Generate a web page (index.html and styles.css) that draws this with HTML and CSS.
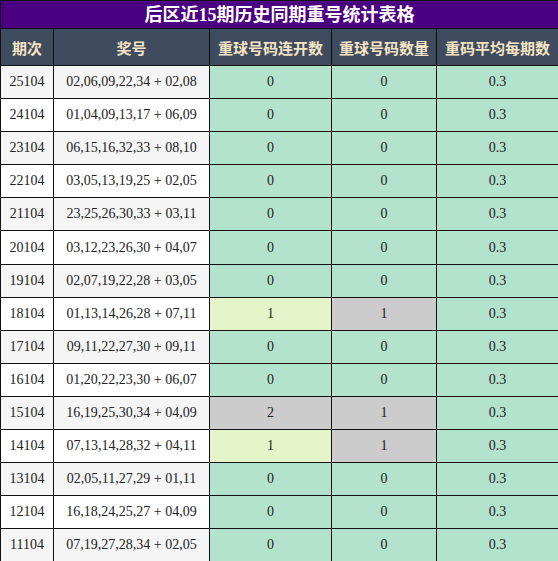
FILE: index.html
```html
<!DOCTYPE html>
<html lang="zh">
<head>
    <meta charset="UTF-8">
    <title>后区近15期历史同期重号统计表格</title>
    <link rel="stylesheet" href="styles.css">
</head>
<body>

<table class="stats">
    <colgroup>
        <col class="c-issue">
        <col class="c-nums">
        <col class="c-a">
        <col class="c-b">
        <col class="c-c">
    </colgroup>
    <thead>
        <tr class="title-row"><th colspan="5">后区近15期历史同期重号统计表格</th></tr>
        <tr class="head-row">
            <th>期次</th>
            <th>奖号</th>
            <th>重球号码连开数</th>
            <th>重球号码数量</th>
            <th>重码平均每期数</th>
        </tr>
    </thead>
    <tbody>
        <tr><td>25104</td><td>02,06,09,22,34 + 02,08</td><td class="g">0</td><td class="g">0</td><td class="g">0.3</td></tr>
        <tr><td>24104</td><td>01,04,09,13,17 + 06,09</td><td class="g">0</td><td class="g">0</td><td class="g">0.3</td></tr>
        <tr><td>23104</td><td>06,15,16,32,33 + 08,10</td><td class="g">0</td><td class="g">0</td><td class="g">0.3</td></tr>
        <tr><td>22104</td><td>03,05,13,19,25 + 02,05</td><td class="g">0</td><td class="g">0</td><td class="g">0.3</td></tr>
        <tr><td>21104</td><td>23,25,26,30,33 + 03,11</td><td class="g">0</td><td class="g">0</td><td class="g">0.3</td></tr>
        <tr><td>20104</td><td>03,12,23,26,30 + 04,07</td><td class="g">0</td><td class="g">0</td><td class="g">0.3</td></tr>
        <tr><td>19104</td><td>02,07,19,22,28 + 03,05</td><td class="g">0</td><td class="g">0</td><td class="g">0.3</td></tr>
        <tr><td>18104</td><td>01,13,14,26,28 + 07,11</td><td class="y">1</td><td class="s">1</td><td class="g">0.3</td></tr>
        <tr><td>17104</td><td>09,11,22,27,30 + 09,11</td><td class="g">0</td><td class="g">0</td><td class="g">0.3</td></tr>
        <tr><td>16104</td><td>01,20,22,23,30 + 06,07</td><td class="g">0</td><td class="g">0</td><td class="g">0.3</td></tr>
        <tr><td>15104</td><td>16,19,25,30,34 + 04,09</td><td class="s">2</td><td class="s">1</td><td class="g">0.3</td></tr>
        <tr><td>14104</td><td>07,13,14,28,32 + 04,11</td><td class="y">1</td><td class="s">1</td><td class="g">0.3</td></tr>
        <tr><td>13104</td><td>02,05,11,27,29 + 01,11</td><td class="g">0</td><td class="g">0</td><td class="g">0.3</td></tr>
        <tr><td>12104</td><td>16,18,24,25,27 + 04,09</td><td class="g">0</td><td class="g">0</td><td class="g">0.3</td></tr>
        <tr><td>11104</td><td>07,19,27,28,34 + 02,05</td><td class="g">0</td><td class="g">0</td><td class="g">0.3</td></tr>
    </tbody>
</table>

</body>
</html>
```

FILE: styles.css
```css
body {
    margin: 0;
    padding: 0;
    background-color: #fff;
    font-family: "Liberation Serif", "Noto Sans CJK SC", serif;
}
.stats {
    width: 558px;
    border-collapse: collapse;
    table-layout: fixed;
    border: 1px solid #111;
}
.c-issue { width: 53px; }
.c-nums { width: 156px; }
.c-a { width: 122px; }
.c-b { width: 105px; }
.c-c { width: 122px; }
.stats th, .stats td {
    border: 1px solid #111;
    padding: 0;
    text-align: center;
}
.title-row th {
    height: 27px;
    background-color: #4b0082;
    color: #fff;
    font-size: 18px;
    font-weight: bold;
    line-height: 26px;
}
.head-row th {
    height: 36px;
    background-color: #3f4b5e;
    color: #f5e4c4;
    font-family: "Noto Sans CJK SC", sans-serif;
    font-size: 15px;
    font-weight: bold;
}
.stats td {
    height: 32.1px;
    font-size: 14px;
    color: #222;
    background-color: #fff;
}
.stats tbody tr:nth-child(odd) td {
    background-color: #f5f5f5;
}
.stats tbody tr td.g {
    background-color: #b3e2cd;
}
.stats tbody tr td.y {
    background-color: #e6f5c9;
}
.stats tbody tr td.s {
    background-color: #cccccc;
}
```
